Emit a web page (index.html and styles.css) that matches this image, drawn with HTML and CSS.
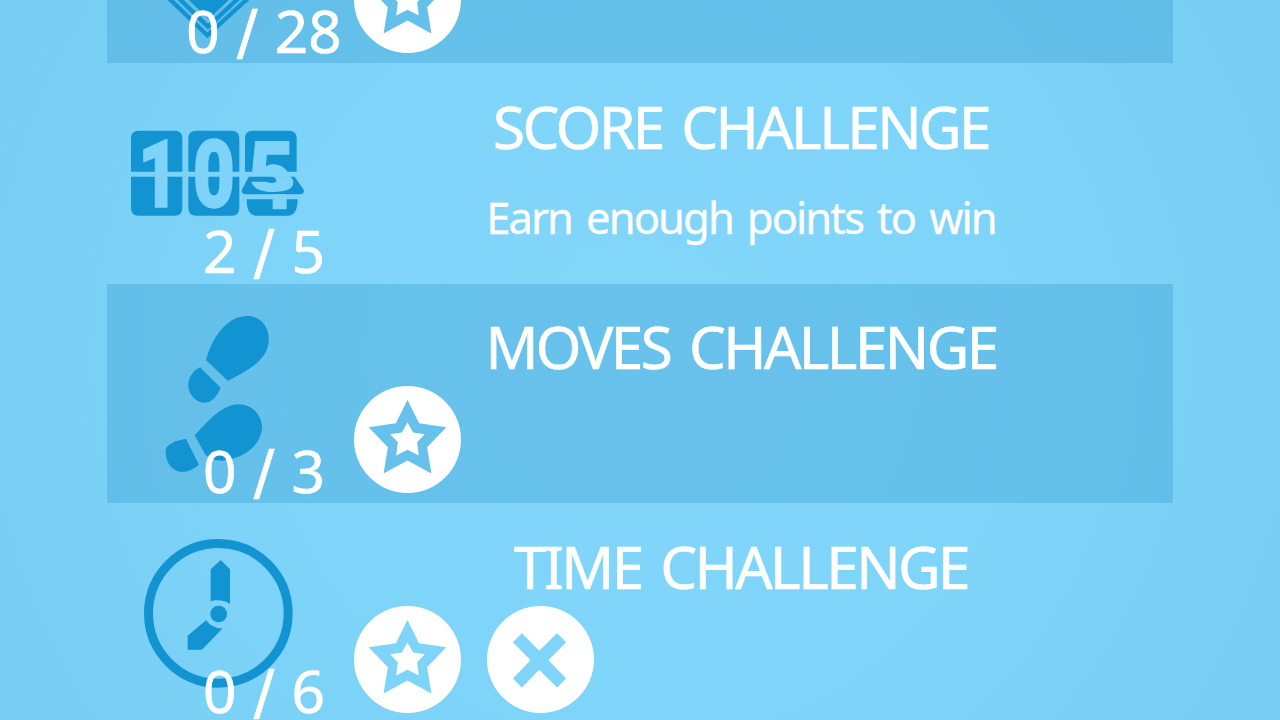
FILE: index.html
```html
<!DOCTYPE html>
<html lang="en">
<head>
<meta charset="utf-8">
<title>Challenges</title>
<link rel="stylesheet" href="styles.css">
</head>
<body>
<svg class="defs" width="0" height="0" aria-hidden="true">
  <symbol id="star" viewBox="39 48 322 322">
    <path fill-rule="evenodd" d="M39 209a161 161 0 1 0 322 0a161 161 0 1 0-322 0ZM200 90L235 160L317 172L259 232L272 311L200 272L128 311L141 232L83 172L165 160Z"/>
    <path d="M200 158L217 188L252 193L229 217L234 257L200 240L166 257L171 217L148 193L183 188Z"/>
  </symbol>
  <symbol id="cross" viewBox="440 48 322 322">
    <path fill-rule="evenodd" d="M440 209a161 161 0 1 0 322 0a161 161 0 1 0-322 0ZM545 130L597 183L651 130L678 157L625 211L678 266L651 293L597 240L545 293L518 266L571 211L518 157Z"/>
  </symbol>
</svg>
<main class="list">
  <section class="row shaded">
    <svg class="icon" viewBox="107 -157 222 220"><g transform="translate(100 0) scale(.33333)">
      <path d="M264 -2H388L326 58Z"/>
      <path class="line" d="M238 -4L324 80L414 -4M208 -4L322 106L443 -4"/>
    </g></svg>
    <p class="count">0 <span class="slash">/</span> 28</p>
    <div class="badges"><svg class="badge"><use href="#star"/></svg></div>
  </section>
  <section class="row">
    <svg class="icon" viewBox="107 63 222 220"><g transform="translate(120 115) scale(.33333)">
      <path d="M33 170V70Q33 47 56 47H164Q187 47 187 70V170ZM33 185H187V279Q187 302 164 302H56Q33 302 33 279Z"/>
      <path d="M205 170V70Q205 47 228 47H335Q358 47 358 70V170ZM205 185H358V279Q358 302 335 302H228Q205 302 205 279Z"/>
      <path d="M375 170V70Q375 47 398 47H507Q530 47 530 70V170ZM380 253H533Q532 302 505 302H408Q380 302 380 253ZM386 185H524L552 226Q552 238 540 238H377Q365 238 365 226Z"/>
      <path class="hole" d="M458 238H500V283H458ZM394 200Q402 231 460 231Q520 231 520 202Q520 190 508 184H455Q472 190 468 200Q460 208 438 200Z"/>
      <text class="digit" transform="translate(54 276) scale(.74 .99)">1</text>
      <text class="digit" transform="translate(218 276) scale(.76 .99)">0</text>
      <svg x="380" y="60" width="150" height="117" viewBox="380 60 150 117"><text class="digit" transform="translate(384 284) scale(.83 1)">5</text></svg>
    </g></svg>
    <p class="count">2 <span class="slash">/</span> 5</p>
    <div class="info"><h2>SCORE CHALLENGE</h2><p class="hint">Earn enough points to win</p></div>
  </section>
  <section class="row shaded">
    <svg class="icon" viewBox="107 283 222 220"><g transform="translate(150 300) scale(.33333)">
      <path d="M168 180C185 120 225 50 290 48C335 47 360 85 356 125C352 180 290 215 233 242Z"/>
      <path d="M150 202L212 263C200 290 185 308 162 308C130 306 112 275 115 250C118 228 132 210 150 202Z"/>
      <path d="M134 406C165 375 210 315 265 313C310 313 338 350 336 385C333 430 290 475 215 482C195 482 175 475 165 462Z"/>
      <path d="M108 417L147 494C130 510 110 517 90 515C60 510 45 480 47 450C50 432 80 420 108 417Z"/>
    </g></svg>
    <p class="count">0 <span class="slash">/</span> 3</p>
    <div class="badges"><svg class="badge"><use href="#star"/></svg></div>
    <div class="info"><h2>MOVES CHALLENGE</h2></div>
  </section>
  <section class="row">
    <svg class="icon" viewBox="107 503 222 220"><g transform="translate(130 530) scale(.33333)">
      <circle class="dial" cx="265" cy="250" r="209.5"/>
      <circle cx="266" cy="252" r="25"/>
      <path d="M242 118L272 90L300 118V222C285 210 258 208 242 214ZM229 270C235 283 255 296 278 295L216 359H173V317Z"/>
    </g></svg>
    <p class="count">0 <span class="slash">/</span> 6</p>
    <div class="badges"><svg class="badge"><use href="#star"/></svg><svg class="badge"><use href="#cross"/></svg></div>
    <div class="info"><h2>TIME CHALLENGE</h2></div>
  </section>
</main>
</body>
</html>
```
FILE: styles.css
```css
body {
  margin: 0;
  height: 720px;
  overflow: hidden;
  background: radial-gradient(circle at 640px 360px, #82d6fa 0, #7fd4f9 350px, #78cdf2 740px);
  color: #fff;
  font-family: "Noto Sans", sans-serif;
}
.defs { position: absolute; }
.list {
  width: 1066px;
  margin: -157px auto 0;
  display: grid;
  grid-auto-rows: 220px;
}
.row {
  display: grid;
  grid-template-columns: 202px 44.5px 67.5px 1fr;
  grid-template-rows: 220px;
}
.shaded { background: linear-gradient(rgba(20, 130, 190, .24), rgba(20, 130, 190, .24)) 0 1px no-repeat; }
.icon {
  grid-area: 1 / 1 / 2 / 3;
  width: 222px;
  height: 220px;
  fill: #1293d2;
}
.line { fill: none; stroke: #1293d2; stroke-width: 13; }
.dial { fill: none; stroke: #1293d2; stroke-width: 27; }
.hole { fill: #7fd3f8; }
.digit {
  fill: #7fd3f8;
  stroke: #7fd3f8;
  stroke-width: 4;
  font: 900 288px Roboto, sans-serif;
}
.count {
  grid-area: 1 / 1 / 2 / 4;
  z-index: 1;
  align-self: end;
  margin: 0 0 -5px;
  text-align: center;
  font-size: 58.5px;
  line-height: 76px;
  word-spacing: 2px;
  -webkit-text-stroke: .7px #fff;
}
.slash { font-family: "DejaVu Sans", sans-serif; font-size: 61px; line-height: 0; }
.badges {
  grid-area: 1 / 3 / 2 / 5;
  display: flex;
  align-items: flex-end;
  gap: 26px;
  padding-bottom: 10px;
}
.badge { width: 107px; height: 107px; fill: #fff; }
.info {
  grid-area: 1 / 2 / 2 / 5;
  padding-top: 22px;
  text-align: center;
}
h2 {
  margin: 0;
  font-size: 58.5px;
  font-weight: 400;
  line-height: 82px;
  letter-spacing: -2.6px;
  word-spacing: 6px;
  -webkit-text-stroke: .6px #fff;
}
.hint {
  margin: 20px 0 0;
  font-size: 43.5px;
  line-height: 60px;
  letter-spacing: -1.9px;
  word-spacing: 4.5px;
  -webkit-text-stroke: .3px #fff;
}
```
